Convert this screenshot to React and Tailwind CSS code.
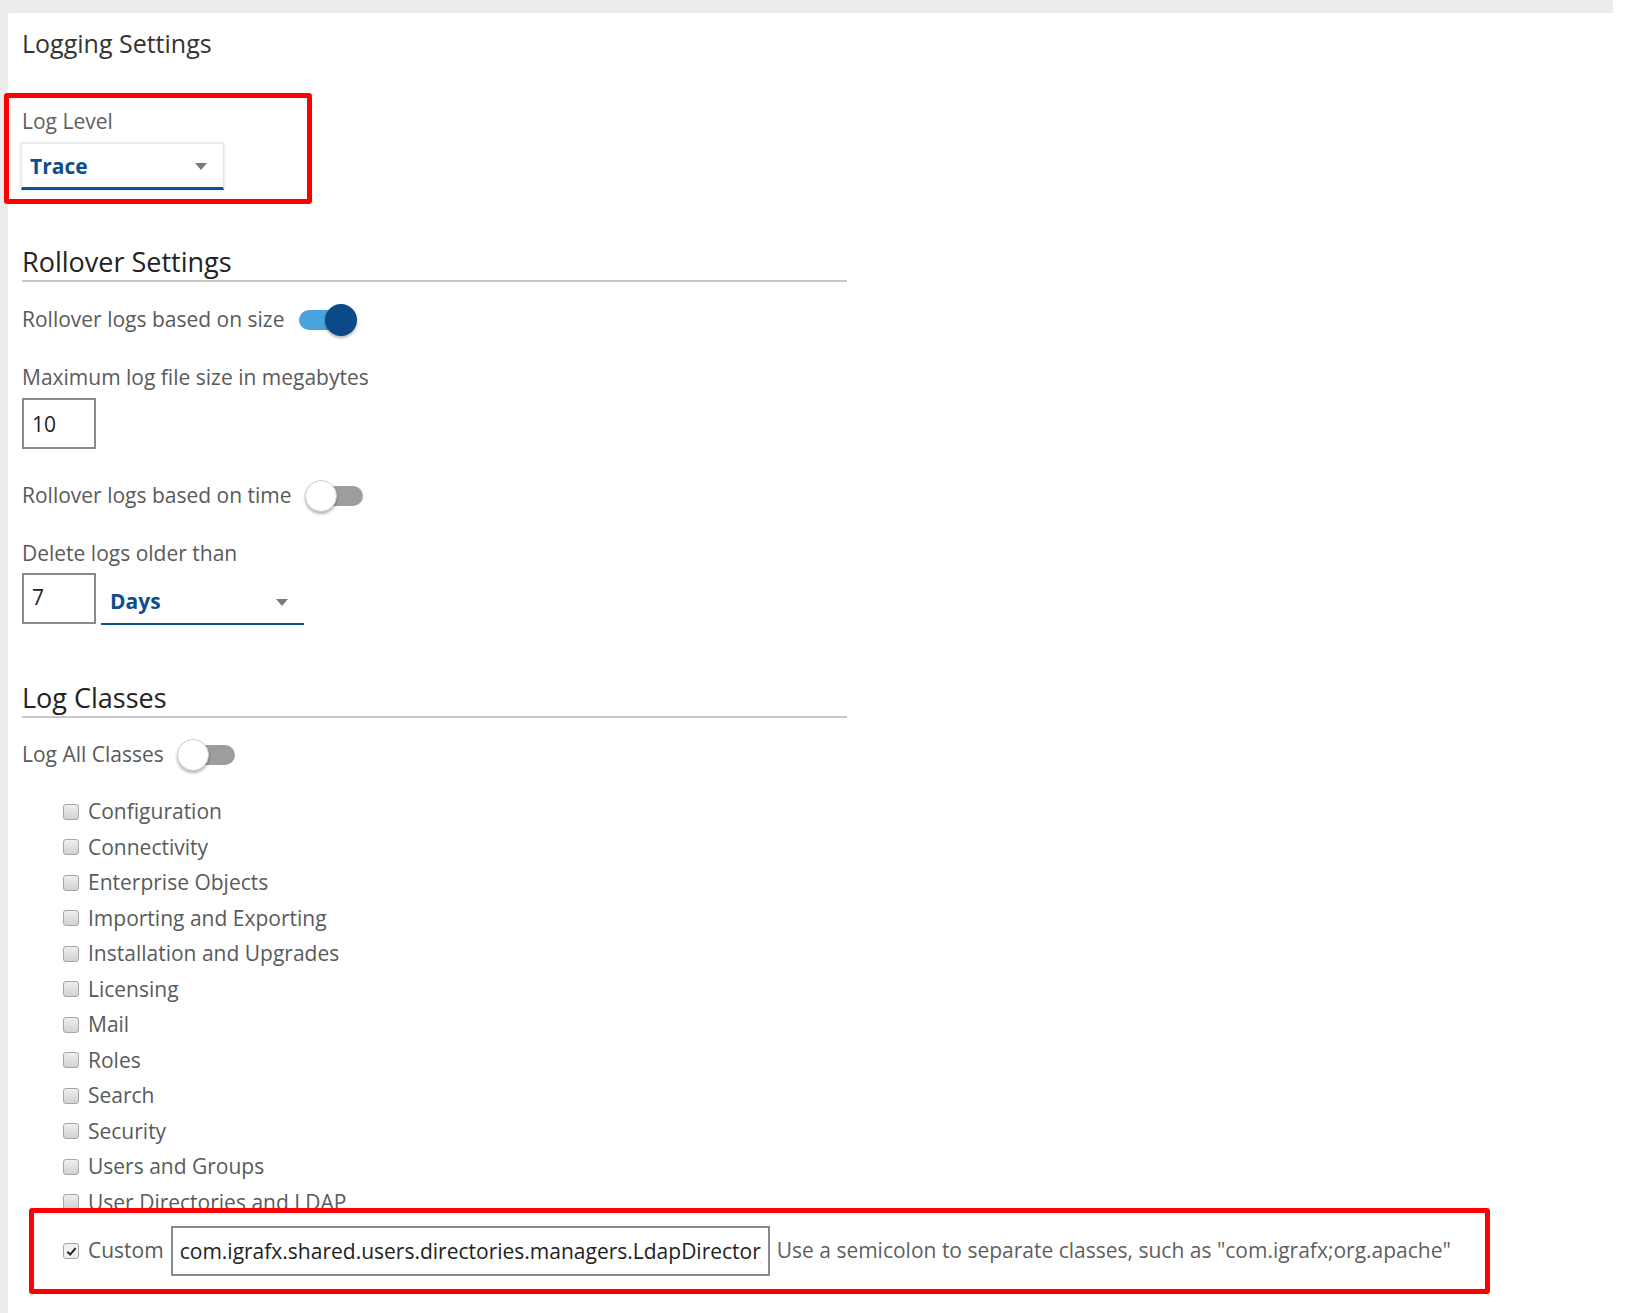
import { useState } from "react";

const logClasses = [
    "Configuration",
    "Connectivity",
    "Enterprise Objects",
    "Importing and Exporting",
    "Installation and Upgrades",
    "Licensing",
    "Mail",
    "Roles",
    "Search",
    "Security",
    "Users and Groups",
    "User Directories and LDAP",
];

const Caret = () => (
    <svg width="12" height="7" viewBox="0 0 12 7" className="shrink-0">
        <polygon points="0,0 12,0 6,7" fill="#7a7a7a" />
    </svg>
);

const Toggle = ({ on, onClick }) => (
    <button type="button" onClick={onClick} className="relative inline-block w-[60px] h-[32px] ml-[13px] shrink-0">
        <span className={`absolute left-[2px] right-[2px] top-[6px] h-[20px] rounded-full ${on ? "bg-[#4ba3de]" : "bg-[#9d9d9d]"}`} />
        <span
            className={`absolute top-0 w-[32px] h-[32px] rounded-full shadow-[0_2px_3px_rgba(0,0,0,0.3)] ${
                on ? "right-0 bg-[#0b4a86]" : "left-0 bg-white border border-[#cfcfcf]"
            }`}
        />
    </button>
);

const Checkbox = ({ checked }) => (
    <span
        className={`flex items-center justify-center w-[16px] h-[16px] rounded-[3px] border border-[#a5a5a5] shrink-0 ${
            checked ? "bg-[#f0f0f0]" : "bg-gradient-to-b from-[#efefef] to-[#d2d2d2]"
        }`}
    >
        {checked && (
            <svg width="11" height="11" viewBox="0 0 11 11">
                <path d="M1.5 5.8 L4.2 8.6 L9.6 2.2" fill="none" stroke="#222" strokeWidth="2" />
            </svg>
        )}
    </span>
);

const SectionHeading = ({ children }) => (
    <h2 className="w-[825px] text-[27px] leading-[36px] text-[#222] border-b-2 border-[#c8c8c8]">{children}</h2>
);

export default function App() {
    const [bySize, setBySize] = useState(true);
    const [byTime, setByTime] = useState(false);
    const [logAll, setLogAll] = useState(false);

    return (
        <div className="flex min-h-screen bg-white font-['Open_Sans',sans-serif]">
            <div className="w-[1613px] shrink-0 bg-[#ececec] pt-[13px] pl-[8px] flex flex-col">
                <div className="flex-1 bg-white rounded-tl-[3px] pl-[14px] pb-[20px]">
                    <h1 className="mt-[14px] text-[25px] leading-[32px] text-[#333]">Logging Settings</h1>

                    {/* log level */}
                    <div className="mt-[34px] ml-[-18px] w-[308px] h-[111px] border-[5px] border-[#ff0000] rounded-[3px] pl-[13px] pt-[9px]">
                        <div className="text-[21px] leading-[28px] text-[#5f5f5f]">Log Level</div>
                        <div className="mt-[8px] ml-[-1px] w-[203px] h-[47px] flex items-center justify-between pl-[8px] pr-[16px] pt-[2px] bg-white border border-[#dde8f2] border-b-[3px] border-b-[#0b5394] shadow-[0_0_3px_rgba(60,120,180,0.25)]">
                            <span className="text-[21px] font-bold text-[#0d4e8c]">Trace</span>
                            <Caret />
                        </div>
                    </div>

                    {/* rollover */}
                    <div className="mt-[40px]">
                        <SectionHeading>Rollover Settings</SectionHeading>
                    </div>

                    <div className="mt-[22px] flex items-center h-[32px] text-[21px] text-[#5a5a5a]">
                        <span>Rollover logs based on size</span>
                        <Toggle on={bySize} onClick={() => setBySize(!bySize)} />
                    </div>

                    <div className="mt-[27px] text-[21px] leading-[28px] text-[#5a5a5a]">Maximum log file size in megabytes</div>
                    <input
                        defaultValue="10"
                        className="mt-[7px] block w-[74px] h-[51px] border-2 border-[#8a8a8a] px-[8px] text-[21px] text-[#222] outline-none"
                    />

                    <div className="mt-[31px] flex items-center h-[32px] text-[21px] text-[#5a5a5a]">
                        <span>Rollover logs based on time</span>
                        <Toggle on={byTime} onClick={() => setByTime(!byTime)} />
                    </div>

                    <div className="mt-[27px] text-[21px] leading-[28px] text-[#5a5a5a]">Delete logs older than</div>
                    <div className="mt-[6px] flex items-end gap-[5px]">
                        <input
                            defaultValue="7"
                            className="block w-[74px] h-[51px] border-2 border-[#8a8a8a] px-[8px] pb-[4px] text-[21px] text-[#222] outline-none"
                        />
                        <div className="w-[203px] h-[46px] mb-[-1px] flex items-center justify-between pl-[9px] pr-[16px] pt-[2px] border-b-2 border-[#0b5394]">
                            <span className="text-[21px] font-bold text-[#0d4e8c]">Days</span>
                            <Caret />
                        </div>
                    </div>

                    {/* log classes */}
                    <div className="mt-[56px]">
                        <SectionHeading>Log Classes</SectionHeading>
                    </div>

                    <div className="mt-[21px] flex items-center h-[32px] text-[21px] text-[#5a5a5a]">
                        <span>Log All Classes</span>
                        <Toggle on={logAll} onClick={() => setLogAll(!logAll)} />
                    </div>

                    <ul className="mt-[23px]">
                        {logClasses.map((name) => (
                            <li key={name} className="flex items-center gap-[9px] h-[35.5px] pl-[41px] text-[21px] text-[#5a5a5a]">
                                <Checkbox />
                                <span>{name}</span>
                            </li>
                        ))}
                    </ul>

                    <div className="relative mt-[-12px] ml-[7px] w-[1461px] h-[86px] bg-white border-[5px] border-[#ff0000] rounded-[3px] pl-[29px] flex items-center">
                        <div className="flex items-center gap-[9px] text-[21px] text-[#5a5a5a]">
                            <Checkbox checked />
                            <span>Custom</span>
                        </div>
                        <input
                            defaultValue="com.igrafx.shared.users.directories.managers.LdapDirectoryManager"
                            className="ml-[7px] w-[599px] h-[50px] border-2 border-[#8a8a8a] px-[7px] text-[21px] text-[#222] outline-none"
                        />
                        <span className="ml-[7px] text-[21px] text-[#5f5f5f] whitespace-nowrap">
                            Use a semicolon to separate classes, such as "com.igrafx;org.apache"
                        </span>
                    </div>
                </div>
            </div>
        </div>
    );
}
